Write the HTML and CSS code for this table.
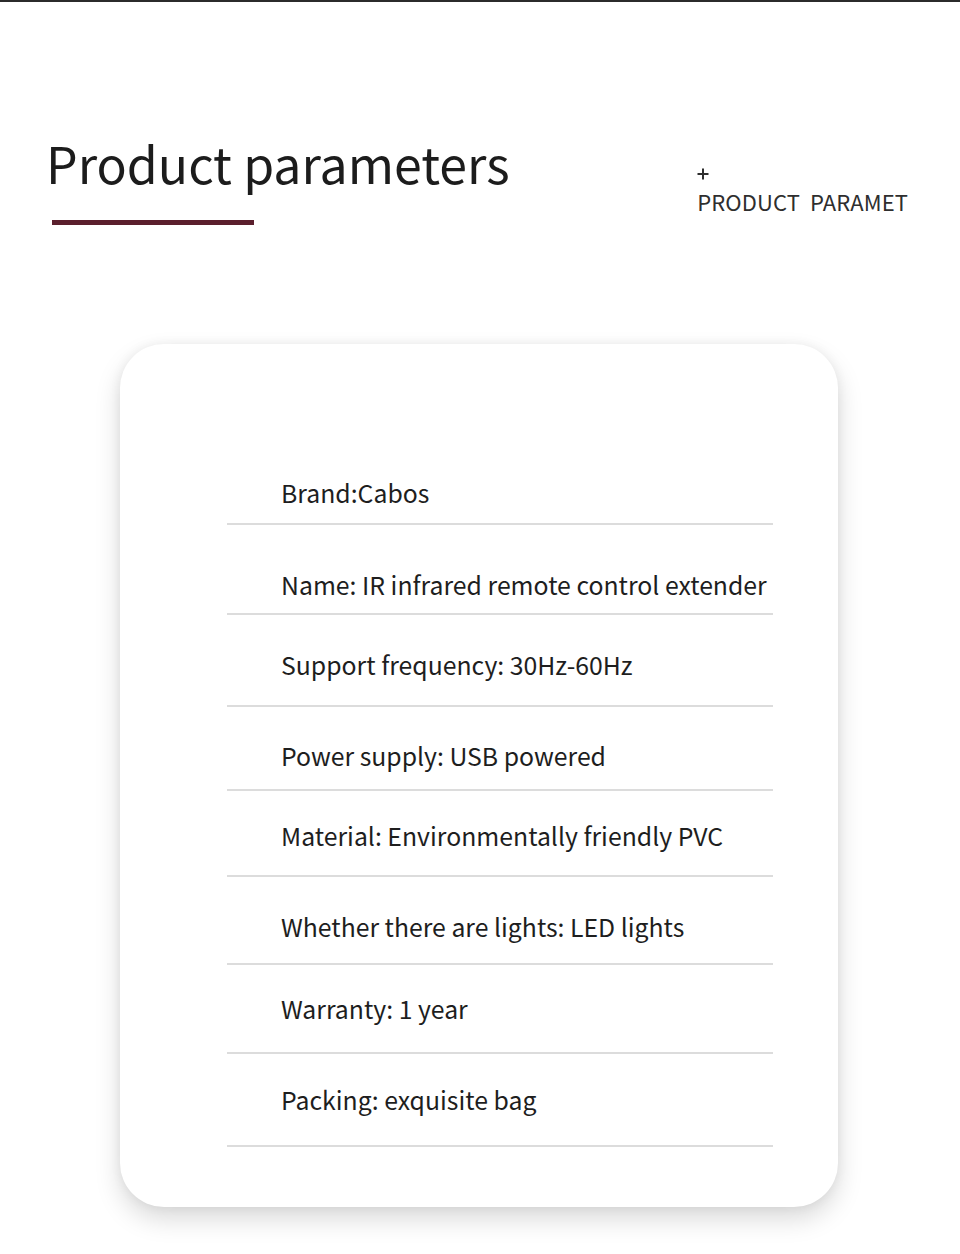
FILE: index.html
```html
<!DOCTYPE html>
<html>
<head>
<meta charset="utf-8">
<link rel="stylesheet" href="styles.css">
</head>
<body>
<div class="topbar"></div>
<header class="head">
  <div class="title-block">
    <h1 class="title">Product parameters</h1>
    <div class="title-rule"></div>
  </div>
  <div class="sub">
    <svg class="plus" width="12" height="12" viewBox="0 0 12 12" aria-hidden="true">
      <path d="M6 0.5V11.5M0.5 6H11.5" stroke="#2e2e2e" stroke-width="2" fill="none"/>
    </svg>
    <div class="sub-text">PRODUCT&nbsp; PARAMET</div>
  </div>
</header>
<section class="card">
  <ul class="rows">
    <li class="row">Brand:Cabos</li>
    <li class="row">Name: IR infrared remote control extender</li>
    <li class="row">Support frequency: 30Hz-60Hz</li>
    <li class="row">Power supply: USB powered</li>
    <li class="row">Material: Environmentally friendly PVC</li>
    <li class="row">Whether there are lights: LED lights</li>
    <li class="row">Warranty: 1 year</li>
    <li class="row">Packing: exquisite bag</li>
  </ul>
</section>
</body>
</html>
```

FILE: styles.css
```css
html, body {
  margin: 0;
  padding: 0;
  background: #ffffff;
}
body {
  width: 960px;
  height: 1254px;
  overflow: hidden;
  font-family: "Noto Sans CJK SC", "Noto Sans", sans-serif;
  color: #1f1f1f;
}
.topbar {
  height: 2px;
  background: #2b2b2b;
}
.head {
  display: flex;
  justify-content: space-between;
  padding: 0 52px 0 46px;
  height: 342px;
}
.title-block {
  padding-top: 124px;
}
.title {
  margin: 0;
  font-size: 50px;
  font-weight: 400;
  line-height: 72px;
  color: #1c1c1c;
}
.title-rule {
  margin: 22px 0 0 6px;
  width: 202px;
  height: 5px;
  background: #5b1f2d;
}
.sub {
  padding-top: 166px;
  color: #2e2e2e;
}
.plus {
  display: block;
  margin-left: 0;
}
.sub-text {
  margin-top: 6px;
  font-size: 22px;
  line-height: 30px;
  letter-spacing: 0.1px;
}
.card {
  width: 718px;
  box-sizing: border-box;
  margin: 0 auto 0 120px;
  height: 863px;
  border-radius: 44px;
  background: #ffffff;
  box-shadow: 0 12px 26px rgba(0, 0, 0, 0.15), 0 0 12px rgba(0, 0, 0, 0.06);
  padding: 133px 60px 0 107px;
}
.rows {
  list-style: none;
  margin: 0;
  padding: 0;
  width: 546px;
}
.row {
  font-size: 24.8px;
  line-height: 30px;
  padding-left: 54px;
  border-bottom: 2px solid #dcdcdc;
  color: #1e1e1e;
  white-space: nowrap;
}
.row:nth-child(1) { padding-top: 0; padding-bottom: 16px; }
.row:nth-child(2) { padding-top: 44px; padding-bottom: 14px; }
.row:nth-child(3) { padding-top: 34px; padding-bottom: 26px; }
.row:nth-child(4) { padding-top: 33px; padding-bottom: 19px; }
.row:nth-child(5) { padding-top: 29px; padding-bottom: 25px; }
.row:nth-child(6) { padding-top: 34px; padding-bottom: 22px; }
.row:nth-child(7) { padding-top: 28px; padding-bottom: 29px; }
.row:nth-child(8) { padding-top: 30px; padding-bottom: 31px; }
```
